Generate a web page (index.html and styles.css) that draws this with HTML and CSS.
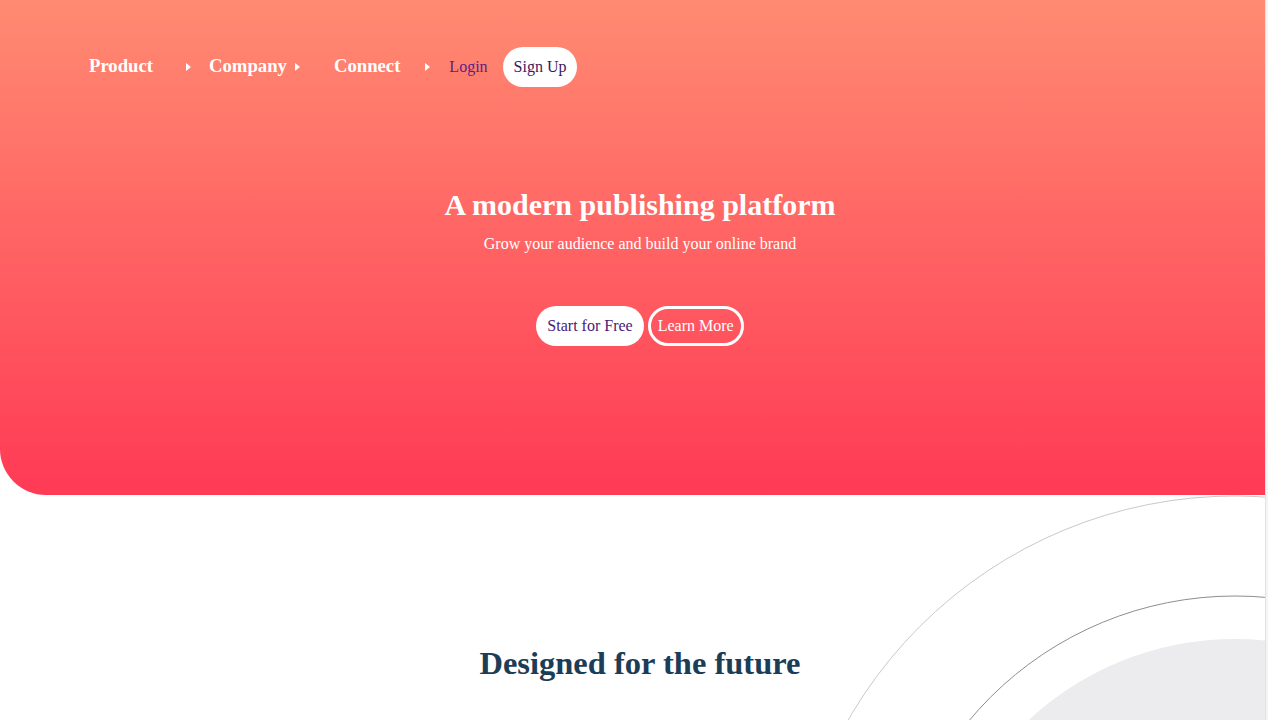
FILE: index.html
```html
<!DOCTYPE html>
<html lang="en">
<head>
<meta charset="utf-8">
<title>A modern publishing platform</title>
<link rel="stylesheet" href="styles.css">
</head>
<body>
<div class="page">
  <div class="main">
    <header class="hero">
      <nav class="nav">
        <a class="nav-item nav-product" href="#">Product</a>
        <span class="caret caret-product"></span>
        <a class="nav-item nav-company" href="#">Company</a>
        <span class="caret caret-company"></span>
        <a class="nav-item nav-connect" href="#">Connect</a>
        <span class="caret caret-connect"></span>
        <a class="login" href="#">Login</a>
        <a class="signup" href="#">Sign Up</a>
      </nav>
      <div class="hero-body">
        <h1 class="hero-title">A modern publishing platform</h1>
        <p class="hero-sub">Grow your audience and build your online brand</p>
        <div class="hero-actions">
          <a class="btn btn-solid" href="#">Start for Free</a>
          <a class="btn btn-outline" href="#">Learn More</a>
        </div>
      </div>
    </header>
    <section class="features">
      <svg class="rings" width="1265" height="225" viewBox="0 0 1265 225" aria-hidden="true">
        <circle cx="1235" cy="447" r="303" fill="#ececee"/>
        <circle cx="1235" cy="447" r="446" fill="none" stroke="#c9c9cb" stroke-width="1"/>
        <circle cx="1235" cy="447" r="346" fill="none" stroke="#8d8d94" stroke-width="1"/>
      </svg>
      <h2 class="features-title">Designed for the future</h2>
    </section>
  </div>
  <div class="track"></div>
</div>
</body>
</html>
```

FILE: styles.css
```css
html, body {
  margin: 0;
  padding: 0;
  background: #ffffff;
  font-family: "Liberation Serif", "Times New Roman", serif;
}

.page {
  display: flex;
  width: 1268px;
  height: 720px;
  overflow: hidden;
}

.main {
  width: 1265px;
  flex: none;
}

.track {
  width: 3px;
  flex: none;
  background: #f4f4f4;
  border-left: 1px solid #e2e2e2;
  box-sizing: border-box;
}

.hero {
  height: 495px;
  box-sizing: border-box;
  background: linear-gradient(to bottom, #ff8b72 0%, #ff3a55 100%);
  border-bottom-left-radius: 46px;
  padding-top: 47px;
}

.nav {
  display: flex;
  align-items: center;
  height: 40px;
  padding-left: 89px;
}

.nav-item {
  color: #ffffff;
  font-weight: bold;
  font-size: 18.7px;
  text-decoration: none;
  line-height: 20px;
  margin-bottom: 2px;
}

.caret {
  width: 0;
  height: 0;
  border-top: 4px solid transparent;
  border-bottom: 4px solid transparent;
  border-left: 5px solid #ffffff;
  margin-bottom: 1px;
}

.caret-product { margin-left: 33px; }
.nav-company { margin-left: 18px; }
.caret-company { margin-left: 8px; }
.nav-connect { margin-left: 34px; }
.caret-connect { margin-left: 25px; }

.login {
  margin-left: 19px;
  color: #5b1f86;
  font-size: 16px;
  text-decoration: none;
}

.signup {
  margin-left: 15px;
  background: #ffffff;
  color: #3d1760;
  font-size: 16px;
  line-height: 20px;
  padding: 10px 11px;
  border-radius: 20px;
  text-decoration: none;
}

.hero-body {
  display: flex;
  flex-direction: column;
  align-items: center;
  padding-left: 15px;
  padding-top: 101px;
  color: #ffffff;
}

.hero-title {
  margin: 0;
  font-size: 30px;
  font-weight: bold;
  line-height: 33px;
}

.hero-sub {
  margin: 14px 0 0;
  font-size: 16px;
  line-height: 18px;
}

.hero-actions {
  display: flex;
  gap: 4px;
  margin-top: 53px;
}

.btn {
  display: block;
  height: 40px;
  box-sizing: border-box;
  border-radius: 20px;
  font-size: 16px;
  line-height: 20px;
  text-decoration: none;
}

.btn-solid {
  background: #ffffff;
  color: #4a1a78;
  padding: 10px 11px;
}

.btn-outline {
  color: #ffffff;
  border: 3px solid #ffffff;
  padding: 7px 7px;
}

.features {
  position: relative;
  height: 225px;
  overflow: hidden;
  padding-left: 15px;
  display: flex;
  flex-direction: column;
  align-items: center;
}

.rings {
  position: absolute;
  left: 0;
  top: 0;
}

.features-title {
  position: relative;
  margin: 150px 0 0;
  font-size: 32.5px;
  font-weight: bold;
  line-height: 36px;
  color: #1b3d58;
}
```
